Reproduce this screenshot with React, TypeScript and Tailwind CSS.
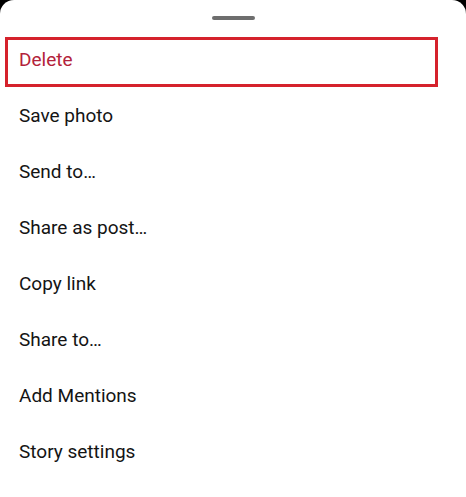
import React from "react";

const items = [
  "Save photo",
  "Send to…",
  "Share as post…",
  "Copy link",
  "Share to…",
  "Add Mentions",
  "Story settings",
];

export default function App() {
  return (
    <div className="w-[466px] h-[497px] bg-black overflow-hidden" style={{ fontFamily: "Roboto, 'Liberation Sans', sans-serif" }}>
      <div className="relative w-full h-full bg-white rounded-t-[14px] flex flex-col">
        <div className="flex justify-center pt-[16px]">
          <div className="w-[43px] h-[4px] rounded-full bg-[#6e6e6e]" />
        </div>
        <div className="mt-[12px] flex flex-col">
          <div className="h-[56px] flex items-center pl-[19px] text-[19px] text-[#b3223a]">Delete</div>
          {items.map((t) => (
            <div key={t} className="h-[56px] flex items-center pl-[19px] text-[19px] text-[#141414]">
              {t}
            </div>
          ))}
        </div>
        <div className="absolute left-[5px] top-[37px] w-[433px] h-[50px] border-[3px] border-[#d5222c]" />
      </div>
    </div>
  );
}
